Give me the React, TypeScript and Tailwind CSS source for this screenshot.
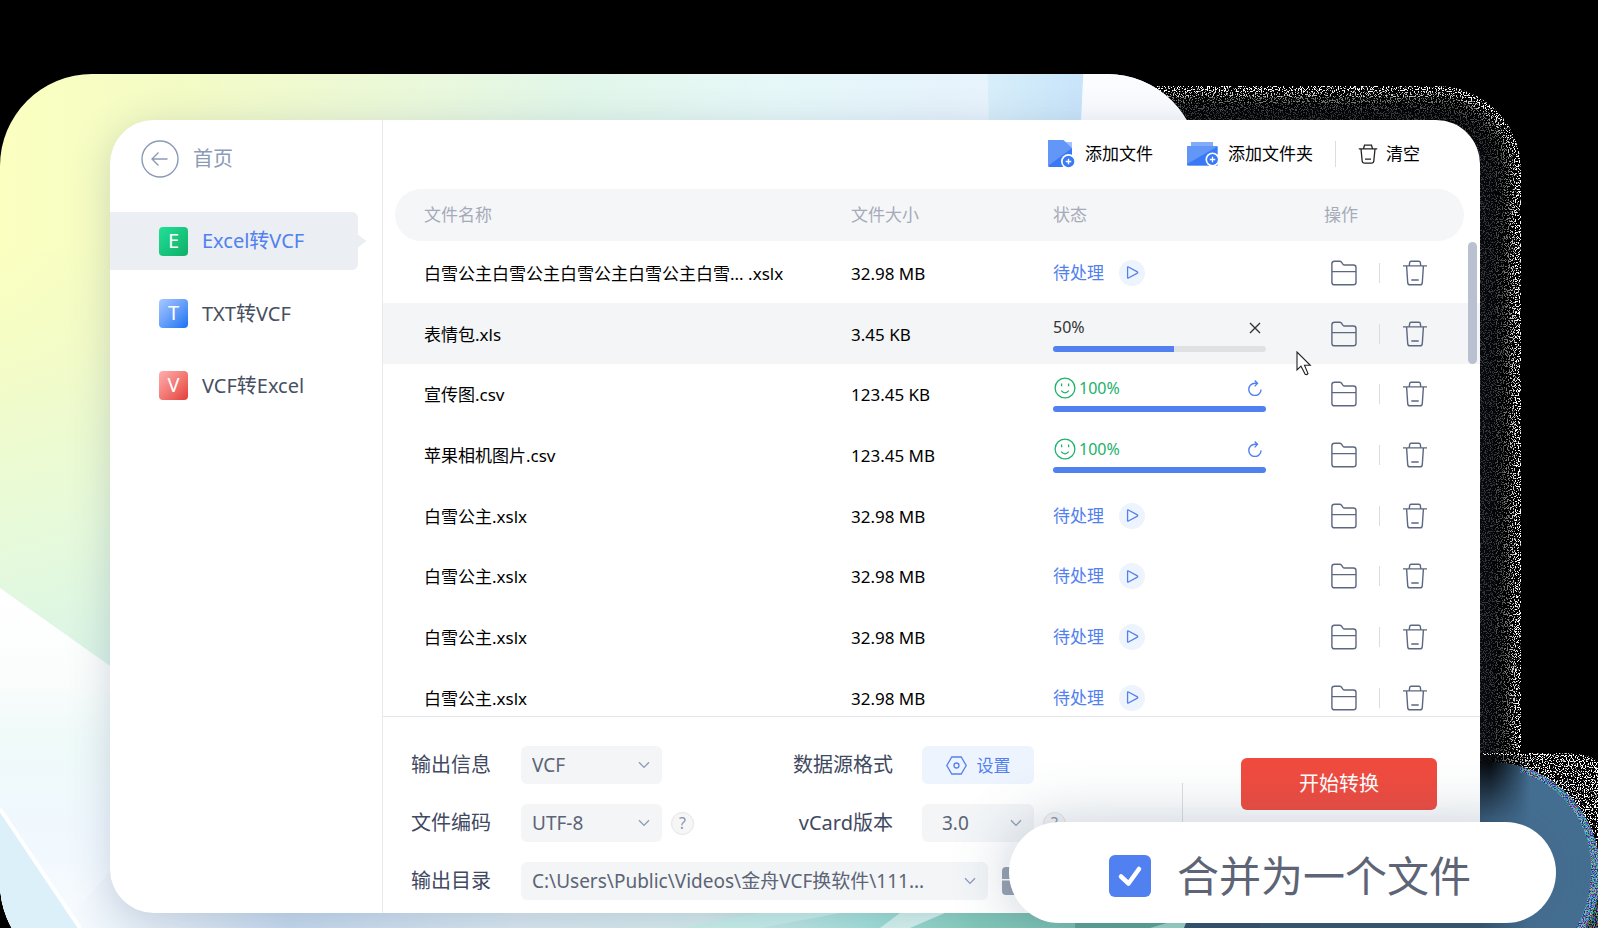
import type { ReactNode } from "react";

type Status = "pending" | "running" | "done";

interface FileRow {
  name: string;
  size: string;
  status: Status;
  bar?: number;
}

const files: FileRow[] = [
  { name: "白雪公主白雪公主白雪公主白雪公主白雪... .xslx", size: "32.98 MB", status: "pending" },
  { name: "表情包.xls", size: "3.45 KB", status: "running", bar: 57 },
  { name: "宣传图.csv", size: "123.45 KB", status: "done", bar: 100 },
  { name: "苹果相机图片.csv", size: "123.45 MB", status: "done", bar: 100 },
  { name: "白雪公主.xslx", size: "32.98 MB", status: "pending" },
  { name: "白雪公主.xslx", size: "32.98 MB", status: "pending" },
  { name: "白雪公主.xslx", size: "32.98 MB", status: "pending" },
  { name: "白雪公主.xslx", size: "32.98 MB", status: "pending" },
];

const glowSteps = [
  { inset: 0, fill: "#ffffff" },
  { inset: 6, fill: "#c8c8c8" },
  { inset: 11, fill: "#787878" },
  { inset: 17, fill: "#4c4c4c" },
  { inset: 25, fill: "#343434" },
];

function Backdrop() {
  return (
    <svg className="absolute inset-0 h-full w-full" viewBox="0 0 1598 928" preserveAspectRatio="xMinYMin slice" aria-hidden="true">
      <defs>
        <linearGradient id="top" x1="0" y1="0" x2="1" y2="0">
          <stop offset="0" stopColor="#fbffc0" />
          <stop offset="0.16" stopColor="#f3fbc6" />
          <stop offset="0.32" stopColor="#ecf9d8" />
          <stop offset="0.48" stopColor="#e2f7ea" />
          <stop offset="0.64" stopColor="#e6f8f8" />
          <stop offset="0.78" stopColor="#e6f3fc" />
          <stop offset="1" stopColor="#f4faff" />
        </linearGradient>
        <linearGradient id="left" x1="0" y1="250" x2="110" y2="680" gradientUnits="userSpaceOnUse">
          <stop offset="0" stopColor="#f3fcc4" stopOpacity="0" />
          <stop offset="0.35" stopColor="#f0fbcc" />
          <stop offset="0.65" stopColor="#e6fadb" />
          <stop offset="1" stopColor="#d8f3e8" />
        </linearGradient>
        <linearGradient id="sheet" x1="0" y1="588" x2="0" y2="928" gradientUnits="userSpaceOnUse">
          <stop offset="0" stopColor="#ffffff" />
          <stop offset="0.25" stopColor="#fbfdfc" />
          <stop offset="0.45" stopColor="#effaf9" />
          <stop offset="0.7" stopColor="#f0f8fe" />
          <stop offset="1" stopColor="#f7fbfe" />
        </linearGradient>
        <linearGradient id="blade" x1="0" y1="0" x2="1" y2="0">
          <stop offset="0" stopColor="#d8effa" />
          <stop offset="1" stopColor="#c8e4fa" />
        </linearGradient>
        <linearGradient id="floor" x1="60" y1="0" x2="1209" y2="0" gradientUnits="userSpaceOnUse">
          <stop offset="0" stopColor="#f7fbfe" />
          <stop offset="0.1" stopColor="#e2edf7" />
          <stop offset="0.2" stopColor="#c8dcf0" />
          <stop offset="0.4" stopColor="#dceaf2" />
          <stop offset="0.56" stopColor="#d8eeee" />
          <stop offset="0.7" stopColor="#a4e4dc" />
          <stop offset="0.8" stopColor="#86d0bd" />
          <stop offset="1" stopColor="#7cc9b2" />
        </linearGradient>
        <linearGradient id="sea" x1="1480" y1="0" x2="1530" y2="0" gradientUnits="userSpaceOnUse">
          <stop offset="0" stopColor="#34546f" />
          <stop offset="1" stopColor="#456f92" />
        </linearGradient>
        <linearGradient id="seaShade" x1="0" y1="762" x2="0" y2="818" gradientUnits="userSpaceOnUse">
          <stop offset="0" stopColor="#000" stopOpacity="0.95" />
          <stop offset="1" stopColor="#000" stopOpacity="0" />
        </linearGradient>
        <linearGradient id="seaShadeFade" x1="1490" y1="0" x2="1530" y2="0" gradientUnits="userSpaceOnUse">
          <stop offset="0" stopColor="#fff" />
          <stop offset="1" stopColor="#000" />
        </linearGradient>
        <filter id="specks" x="0" y="0" width="100%" height="100%">
          <feTurbulence type="fractalNoise" baseFrequency="0.83" numOctaves="2" seed="4" />
          <feColorMatrix values="0 0 0 0 1  0 0 0 0 1  0 0 0 0 1  20 0 0 0 -10.8" />
        </filter>
        <filter id="colorSpecks" x="0" y="0" width="100%" height="100%">
          <feTurbulence type="fractalNoise" baseFrequency="0.85" numOctaves="2" seed="9" />
          <feColorMatrix values="7 0 0 0 -3.4  0 7 0 0 -3.1  0 0 7 0 -2.8  0 0 0 0 1" />
        </filter>
        <mask id="glow" maskUnits="userSpaceOnUse" x="1000" y="60" width="598" height="868">
          {glowSteps.map((s) => (
            <rect
              key={s.inset}
              x={600 + s.inset}
              y={86 + s.inset}
              width={921 - s.inset * 2}
              height={1000}
              rx={84 - s.inset}
              fill={s.fill}
            />
          ))}
        </mask>
        <mask id="rim" maskUnits="userSpaceOnUse" x="1380" y="740" width="218" height="188">
          <path d="M1480 753H1560Q1590 753 1598 762V872H1480Z" fill="#fff" />
        </mask>
        <mask id="shade" maskUnits="userSpaceOnUse" x="1380" y="740" width="218" height="188">
          <rect x="1380" y="740" width="218" height="188" fill="url(#seaShadeFade)" />
        </mask>
        <clipPath id="card">
          <rect x="0" y="74" width="1199" height="901" rx="92" />
        </clipPath>
        <clipPath id="ring">
          <path d="M1520 766A110 110 0 0 1 1600 872V928H1576Q1590 905 1591 872A100 100 0 0 0 1520 772Z" />
        </clipPath>
      </defs>

      <g mask="url(#glow)">
        <rect x="1000" y="60" width="598" height="868" filter="url(#specks)" />
      </g>
      <g mask="url(#rim)">
        <rect x="1480" y="745" width="118" height="183" filter="url(#specks)" />
      </g>
      <rect x="1150" y="762" width="450" height="221" rx="110" fill="url(#sea)" />
      <g clipPath="url(#ring)" opacity="0.55">
        <rect x="1480" y="745" width="118" height="183" filter="url(#colorSpecks)" />
      </g>
      <rect x="1440" y="755" width="100" height="70" fill="url(#seaShade)" mask="url(#shade)" />

      <g clipPath="url(#card)">
        <rect x="0" y="74" width="1209" height="854" fill="url(#top)" />
        <rect x="0" y="250" width="400" height="430" fill="url(#left)" />
        <rect x="0" y="860" width="1209" height="68" fill="url(#floor)" />
        <path d="M0 588L120 673V860L60 928H0Z" fill="url(#sheet)" />
        <path d="M0 811L80 928H0Z" fill="#dcf0fa" />
        <path d="M0 809L80 928" stroke="#fff" strokeWidth="4" />
        <path d="M987 60H1084L1081 125H989Z" fill="url(#blade)" />
        <path d="M1084 60H1209V125H1081Z" fill="#fafcff" />
        <path d="M680 928L760 913H840L760 928Z" fill="#c9f2ec" />
        <path d="M900 913L945 913L910 928H880Z" fill="#d6f6f0" />
        <path d="M1075 913H1190L1184 928H1075Z" fill="#5fae98" />
        <path d="M1150 928L1190 916V928Z" fill="#a8e6cf" />
      </g>
      <path d="M1190 913H1260V928H1184Z" fill="#304f69" />
    </svg>
  );
}

function BackIcon() {
  return (
    <svg className="h-[38px] w-[38px]" viewBox="0 0 38 38" fill="none" stroke="#8c9ab8" strokeWidth="1.4" aria-hidden="true">
      <circle cx="19" cy="19" r="18" />
      <path d="M26.500 19H11.500M17.500 12.500L11 19L17.500 25.500" />
    </svg>
  );
}

function AddFileIcon() {
  return (
    <svg className="h-[30px] w-[28px]" viewBox="0 0 28 30" aria-hidden="true">
      <path d="M14 3H24V16H14Z" fill="#a3c2fb" />
      <path d="M0 1H15.500L24 9V28H2Q0 28 0 26Z" fill="#6397f7" />
      <path d="M24 9V28H2Q0.500 28 0 27Z" fill="#3a79f5" />
      <circle cx="20.500" cy="22.500" r="7.500" fill="#fff" />
      <circle cx="20.500" cy="22.500" r="5.800" fill="#3a79f5" />
      <path d="M20.500 19.700V25.300M17.700 22.500H23.300" stroke="#fff" strokeWidth="1.400" />
    </svg>
  );
}

function AddFolderIcon() {
  return (
    <svg className="h-[26px] w-[33px]" viewBox="0 0 33 26" aria-hidden="true">
      <path d="M5 1H27V7H5Z" fill="#82acf9" />
      <path d="M1 5H31.500V24.500H2.500Q1 24.500 1 23Z" fill="#6397f7" />
      <path d="M31.500 5.500V24.500H2.500Q1 24.500 1 23Z" fill="#3a79f5" />
      <circle cx="26.500" cy="18.500" r="7" fill="#fff" />
      <circle cx="26.500" cy="18.500" r="5.400" fill="#3a79f5" />
      <path d="M26.500 15.800V21.200M23.800 18.500H29.200" stroke="#fff" strokeWidth="1.300" />
    </svg>
  );
}

function ClearIcon() {
  return (
    <svg className="h-5 w-5" viewBox="0 0 20 20" fill="none" stroke="#222" strokeWidth="1.300" aria-hidden="true">
      <path d="M0.800 4.800H19.200M5.500 4.600L6.500 1.200H13.500L14.500 4.600M3 5L4.200 17Q4.400 19.200 6.600 19.200H13.400Q15.600 19.200 15.800 17L17 5M7 15.200H13" />
    </svg>
  );
}

function TrashIcon() {
  return (
    <svg className="h-[26px] w-[26px]" viewBox="0 0 26 26" fill="none" stroke="#5c6780" strokeWidth="1.400" aria-hidden="true">
      <path d="M1 5.900H25M7.200 5.800L7.700 2.300Q7.900 1.200 9 1.200H17Q18.100 1.200 18.300 2.300L18.800 5.800M4.600 6L5.700 22.600Q5.900 24.800 8 24.800H18Q20.100 24.800 20.300 22.600L21.400 6M9.300 20H16.700" />
    </svg>
  );
}

function FolderIcon() {
  return (
    <svg className="h-[26px] w-[26px]" viewBox="0 0 26 26" fill="none" stroke="#5c6780" strokeWidth="1.400" strokeLinejoin="round" aria-hidden="true">
      <path d="M0.900 22.200V3.800Q0.900 1.200 3.500 1.200H8.600Q9.800 1.200 10.500 2.200L12 4.300Q12.500 5 13.400 5H22.400Q25 5 25 7.600V22.200Q25 24.800 22.400 24.800H3.500Q0.900 24.800 0.900 22.200ZM0.900 11.600H25" />
    </svg>
  );
}

function PlayIcon() {
  return (
    <svg className="h-[13px] w-[13px]" viewBox="0 0 14 14" fill="none" stroke="#5180f0" strokeWidth="1.400" strokeLinejoin="round" aria-hidden="true">
      <path d="M1.700 1.600V12.400Q1.700 13.400 2.600 12.900L12.300 7.600Q13 7 12.300 6.400L2.600 1.100Q1.700 0.600 1.700 1.600Z" />
    </svg>
  );
}

function SmileIcon() {
  return (
    <svg className="h-[22px] w-[22px]" viewBox="0 0 22 22" fill="none" stroke="#1bb26a" strokeWidth="1.300" aria-hidden="true">
      <circle cx="11" cy="11" r="9.900" />
      <path d="M7.600 6.600V9.200M14.600 6.600V9.200M7.200 13.600Q11 18 14.800 13.600" />
    </svg>
  );
}

function RetryIcon() {
  return (
    <svg className="h-4 w-[14px]" viewBox="0 0 14 16" fill="none" stroke="#5180f0" strokeWidth="1.400" aria-hidden="true">
      <path d="M9.500 3.300H6.900A6.100 6.100 0 1 0 13 9.400M6.700 0.600L9.500 3.300L6.700 6.400" />
    </svg>
  );
}

function CloseIcon() {
  return (
    <svg className="h-3 w-3" viewBox="0 0 12 12" stroke="#333" strokeWidth="1.400" aria-hidden="true">
      <path d="M1 1L11 11M11 1L1 11" />
    </svg>
  );
}

function ChevronIcon() {
  return (
    <svg className="pointer-events-none absolute top-[15px] right-3 h-2 w-3" viewBox="0 0 12 8" fill="none" stroke="#8c9ab8" strokeWidth="1.300" aria-hidden="true">
      <path d="M1 1.200L6 6.400L11 1.200" />
    </svg>
  );
}

function NavItem({ letter, label, tint, active }: { letter: string; label: string; tint: string; active?: boolean }) {
  return (
    <li className={active ? "relative mr-6 rounded-r-md bg-[#ebeef3]" : "relative mr-6"}>
      <a href="#" className="flex h-[58px] items-center gap-[14px] pl-[49px]">
        <span className={`flex h-[29px] w-[29px] items-center justify-center rounded bg-linear-to-br text-[20px] leading-none text-white ${tint}`}>
          {letter}
        </span>
        <span className={active ? "text-[20px] text-[#5180f0]" : "pt-[2px] text-[20px] text-[#475061]"}>{label}</span>
      </a>
      {active && (
        <svg className="absolute top-[22px] left-full h-[14px] w-[9px]" viewBox="0 0 9 14" aria-hidden="true">
          <path d="M0 0.500L8.500 7L0 13.500Z" fill="#ebeef3" />
        </svg>
      )}
    </li>
  );
}

function StatusCell({ file }: { file: FileRow }) {
  if (file.status === "pending") {
    return (
      <div className="flex items-center gap-[15px] text-[17px] text-[#5180f0]">
        待处理
        <button type="button" aria-label="开始" className="flex h-[26px] w-[26px] items-center justify-center rounded-full bg-[#edf4fe]">
          <PlayIcon />
        </button>
      </div>
    );
  }
  const done = file.status === "done";
  return (
    <div className="flex w-[213px] flex-col gap-[6px]">
      <div className="flex h-[24px] items-center justify-between pr-1 text-[16px]">
        {done ? (
          <span className="flex items-center gap-[3px] pl-px text-[#1bb26a]">
            <SmileIcon />
            100%
          </span>
        ) : (
          <span className="pb-[2px] text-[#333]">50%</span>
        )}
        <button type="button" aria-label={done ? "重试" : "取消"} className={done ? "" : "pr-px"}>
          {done ? <RetryIcon /> : <CloseIcon />}
        </button>
      </div>
      <div className="h-[6px] overflow-hidden rounded-full bg-[#e0e1e3]">
        <div className="h-full bg-[#5180f0]" style={{ width: `${file.bar}%` }} />
      </div>
    </div>
  );
}

function HeadCell({ children, className }: { children: ReactNode; className: string }) {
  return (
    <th scope="col" className="p-0 text-left align-top font-normal">
      <div className={`flex h-[52px] items-center bg-[#f5f6f8] ${className}`}>{children}</div>
    </th>
  );
}

function FileTable() {
  return (
    <div className="relative h-[528px] overflow-hidden border-b border-[#e6e6e8]">
      <table className="w-full table-fixed border-collapse text-[17px]">
        <colgroup>
          <col />
          <col className="w-[202px]" />
          <col className="w-[271px]" />
          <col className="w-[156px]" />
        </colgroup>
        <thead className="text-[#a5aab8]">
          <tr className="h-[53px]">
            <HeadCell className="ml-3 rounded-l-full pl-[29px]">文件名称</HeadCell>
            <HeadCell className="">文件大小</HeadCell>
            <HeadCell className="">状态</HeadCell>
            <HeadCell className="mr-4 rounded-r-full">操作</HeadCell>
          </tr>
        </thead>
        <tbody>
          {files.map((file, i) => (
            <tr key={i} className={file.status === "running" ? "h-[61px] bg-[#f3f5f7]" : "h-[61px] nth-[3n]:h-[60px]"}>
              <td className="truncate p-0 pt-[2px] pl-[41px] text-black">{file.name}</td>
              <td className="p-0 pt-[2px] text-black">{file.size}</td>
              <td className="p-0">
                <StatusCell file={file} />
              </td>
              <td className="p-0">
                <div className="flex items-center pl-[7px]">
                  <button type="button" aria-label="打开文件夹">
                    <FolderIcon />
                  </button>
                  <span className="mx-[22px] h-5 w-px bg-[#d9dce1]" />
                  <button type="button" aria-label="删除">
                    <TrashIcon />
                  </button>
                </div>
              </td>
            </tr>
          ))}
        </tbody>
      </table>
      <div className="absolute top-[53px] right-[3px] h-[122px] w-[9px] rounded-full bg-[#b9c1d0]" />
    </div>
  );
}

function Picker({ id, value, className, pad }: { id: string; value: string; className: string; pad: string }) {
  return (
    <div className={`relative ${className}`}>
      <select id={id} className={`block h-[38px] w-full appearance-none rounded-md bg-[#f3f5f7] pr-8 text-[19px] text-[#5c6475] ${pad}`}>
        <option>{value}</option>
      </select>
      <ChevronIcon />
    </div>
  );
}

function Help() {
  return (
    <button type="button" aria-label="帮助" className="ml-[9px] flex h-[23px] w-[23px] items-center justify-center rounded-full border border-[#e4e4e6] bg-[#f6f6f7] text-[16px] leading-none text-[#8c96a8]">
      ?
    </button>
  );
}

function Footer() {
  return (
    <div className="flex items-start pt-[29px] pr-[43px] pb-[13px] pl-7">
      <div className="grid grid-cols-[110px_141px_260px_112px_auto] items-center gap-y-5 text-[20px] text-[#3f4961]">
        <label htmlFor="output">输出信息</label>
        <Picker id="output" value="VCF" className="w-full" pad="pl-[11px]" />
        <span className="pr-[29px] text-right">数据源格式</span>
        <button type="button" className="flex h-[38px] items-center justify-center gap-[10px] rounded-md bg-[#edf4fe] text-[17px] text-[#5180f0]">
          <svg className="h-[19px] w-[21px]" viewBox="0 0 21 19" fill="none" stroke="#5180f0" strokeWidth="1.300" aria-hidden="true">
            <path d="M5.800 1H15.200L20.200 9.500L15.200 18H5.800L0.800 9.500Z" />
            <circle cx="10.500" cy="9.500" r="2.500" />
          </svg>
          <span className="pt-[2px]">设置</span>
        </button>
        <span />

        <label htmlFor="encoding">文件编码</label>
        <Picker id="encoding" value="UTF-8" className="w-full" pad="pl-[11px]" />
        <div className="flex items-center justify-between pr-[29px]">
          <Help />
          <label htmlFor="version">vCard版本</label>
        </div>
        <Picker id="version" value="3.0" className="w-full" pad="pl-5" />
        <Help />

        <label htmlFor="target">输出目录</label>
        <div className="col-span-4 flex items-center gap-[14px]">
          <Picker id="target" value="C:\Users\Public\Videos\金舟VCF换软件\111..." className="w-[467px]" pad="pl-[11px]" />
          <button type="button" aria-label="浏览">
            <svg className="h-[28px] w-[32px]" viewBox="0 0 32 28" aria-hidden="true">
              <path d="M4 0H12L16 4H28Q32 4 32 8V12H0V4Q0 0 4 0ZM0 13.500H32V24Q32 28 28 28H4Q0 28 0 24Z" fill="#98a1b1" />
            </svg>
          </button>
        </div>
      </div>
      <div className="mt-[12px] ml-auto flex items-start gap-[58px]">
        <span className="mt-[25px] h-[90px] w-px bg-[#dcdfe4]" />
        <button type="button" className="h-[52px] w-[196px] rounded-md bg-[#f04b3f] text-[20px] text-white">
          开始转换
        </button>
      </div>
    </div>
  );
}

function Toolbar() {
  return (
    <div className="flex h-[69px] items-center justify-end pr-[60px] pb-[2px] text-[17px] text-black">
      <button type="button" className="flex items-center gap-[9px]">
        <AddFileIcon />
        添加文件
      </button>
      <button type="button" className="ml-[33px] flex items-center gap-[9px]">
        <AddFolderIcon />
        添加文件夹
      </button>
      <span className="mx-[22px] h-[26px] w-px bg-[#dcdde0]" />
      <button type="button" className="flex items-center gap-2">
        <ClearIcon />
        清空
      </button>
    </div>
  );
}

export default function App() {
  return (
    <div className="relative min-h-screen overflow-hidden bg-black pt-[120px] pr-[118px] pb-[15px] pl-[110px] font-['Noto_Sans','Noto_Sans_CJK_SC',sans-serif]">
      <Backdrop />
      <main className="relative flex overflow-hidden rounded-[44px] bg-white shadow-[0_8px_40px_rgba(70,90,130,0.24)]">
        <nav className="w-[273px] shrink-0 border-r border-[#e9e9eb]">
          <a href="#" className="flex items-center gap-[14px] pt-5 pl-[31px] text-[20px] text-[#8c9ab8]">
            <BackIcon />
            首页
          </a>
          <ul className="mt-[34px] flex flex-col gap-[14px]">
            <NavItem letter="E" label="Excel转VCF" tint="from-[#22e096] to-[#0fae68]" active />
            <NavItem letter="T" label="TXT转VCF" tint="from-[#a9c8ff] to-[#0f70f2]" />
            <NavItem letter="V" label="VCF转Excel" tint="from-[#ffaeae] to-[#e23a3a]" />
          </ul>
        </nav>
        <section className="min-w-0 flex-1">
          <Toolbar />
          <FileTable />
          <Footer />
        </section>
      </main>

      <label className="absolute right-[42px] bottom-[5px] flex h-[101px] w-[547px] items-center gap-[26px] rounded-full bg-white pt-[6px] pl-[100px] text-[42px] text-[#5c6475] shadow-[0_0_60px_rgba(60,90,120,0.3)]">
        <span className="relative h-[42px] w-[42px]">
          <input type="checkbox" defaultChecked className="block h-[42px] w-[42px] appearance-none rounded-[6px] bg-[#5180f0]" />
          <svg className="pointer-events-none absolute inset-0" viewBox="0 0 42 42" fill="none" stroke="#fff" strokeWidth="4.500" strokeLinecap="round" strokeLinejoin="round" aria-hidden="true">
            <path d="M12 21.500L19.500 28.500L30 14" />
          </svg>
        </span>
        合并为一个文件
      </label>

      <svg className="pointer-events-none absolute top-[351px] left-[1296px] h-[25px] w-[16px]" viewBox="0 0 16 25" fill="#fff" stroke="#222" strokeWidth="1.100" aria-hidden="true">
        <path d="M1 1V19L5 15.200L9.200 23.300Q10.600 24.200 12 22.600L8.500 14.300H14.300Z" />
      </svg>
    </div>
  );
}
